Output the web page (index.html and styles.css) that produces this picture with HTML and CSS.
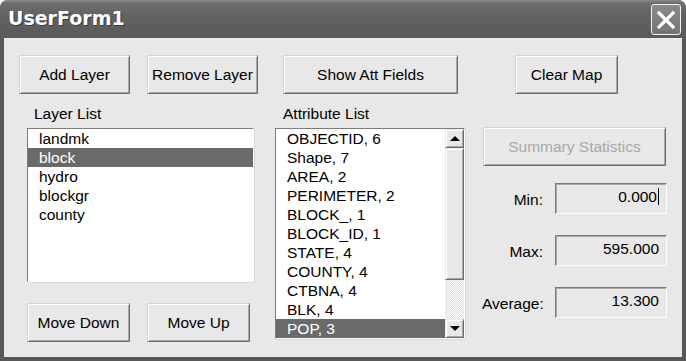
FILE: index.html
```html
<!DOCTYPE html>
<html>
<head>
    <title>UserForm1</title>
    <link rel="stylesheet" href="styles.css">
</head>
<body>
<div class="window">
    <div class="titleBar">
        <span class="titleText">UserForm1</span>
        <div class="closeBtn">
            <svg width="22" height="22" viewBox="0 0 22 22"><path d="M4 4 L18 18 M18 4 L4 18" stroke="#fff" stroke-width="3.2" stroke-linecap="square"/></svg>
        </div>
    </div>
    <div class="client">
        <div class="topRow">
            <div class="btn btnAdd">Add Layer</div>
            <div class="btn btnRemove">Remove Layer</div>
            <div class="btn btnShow">Show Att Fields</div>
            <div class="btn btnClear">Clear Map</div>
        </div>
        <div class="mainRow">
            <div class="col colLayers">
                <div class="label">Layer List</div>
                <div class="listBox layerList">
                    <div class="item">landmk</div>
                    <div class="item selected">block</div>
                    <div class="item">hydro</div>
                    <div class="item">blockgr</div>
                    <div class="item">county</div>
                </div>
                <div class="moveRow">
                    <div class="btn btnMove">Move Down</div>
                    <div class="btn btnMove btnUp">Move Up</div>
                </div>
            </div>
            <div class="col colAttrs">
                <div class="label">Attribute List</div>
                <div class="listBox attrList">
                    <div class="items">
                        <div class="item">OBJECTID, 6</div>
                        <div class="item">Shape, 7</div>
                        <div class="item">AREA, 2</div>
                        <div class="item">PERIMETER, 2</div>
                        <div class="item">BLOCK_, 1</div>
                        <div class="item">BLOCK_ID, 1</div>
                        <div class="item">STATE, 4</div>
                        <div class="item">COUNTY, 4</div>
                        <div class="item">CTBNA, 4</div>
                        <div class="item">BLK, 4</div>
                        <div class="item selected">POP, 3</div>
                    </div>
                    <div class="scrollBar">
                        <div class="sbBtn"><span class="triUp"></span></div>
                        <div class="sbThumb"></div>
                        <div class="sbTrack"></div>
                        <div class="sbBtn"><span class="triDown"></span></div>
                    </div>
                </div>
            </div>
            <div class="col colStats">
                <div class="btn btnStats disabled">Summary Statistics</div>
                <div class="statRow first">
                    <div class="statLabel">Min:</div>
                    <div class="statBox">0.000<span class="caret"></span></div>
                </div>
                <div class="statRow">
                    <div class="statLabel">Max:</div>
                    <div class="statBox">595.000</div>
                </div>
                <div class="statRow">
                    <div class="statLabel">Average:</div>
                    <div class="statBox">13.300</div>
                </div>
            </div>
        </div>
    </div>
</div>
</body>
</html>
```
FILE: styles.css
```css
html,body{
    margin: 0;
    padding: 0;
    background-color: #fff;
}
.window{
    width: 686px;
    height: 361px;
    background-color: #575757;
    border-radius: 8px 8px 0 0;
    box-sizing: border-box;
    display: flex;
    flex-direction: column;
    overflow: hidden;
    font-family: "Liberation Sans", Arial, sans-serif;
    font-size: 15.5px;
    color: #000;
}
.titleBar{
    height: 38px;
    flex: none;
    display: flex;
    align-items: center;
    justify-content: space-between;
    padding: 0 5px 0 8px;
    background: linear-gradient(#8c8c8c 0, #6e6e6e 3px, #626262 40%, #5a5a5a 100%);
}
.titleText{
    font-family: "DejaVu Sans", sans-serif;
    font-weight: bold;
    font-size: 19px;
    color: #fff;
    text-shadow: 1px 1px 0 #3a3a3a;
    margin-top: -2px;
}
.closeBtn{
    width: 28px;
    height: 29px;
    border: 1px solid #f4f4f4;
    border-radius: 3px;
    background: linear-gradient(#8a8a8a, #747474);
    display: flex;
    align-items: center;
    justify-content: center;
    margin-top: 1px;
}
.client{
    flex: 1;
    margin: 0 4px 4px 4px;
    background-color: #e8e8e8;
    padding-top: 17px;
    box-sizing: border-box;
    border-top: 1px solid #f0f0f0;
}
.btn{
    height: 39px;
    box-sizing: border-box;
    border: 1px solid;
    border-color: #d4d4d4 #6e6e6e #6e6e6e #d4d4d4;
    box-shadow: inset 1px 1px 0 #fff, inset -1px -1px 0 #a6a6a6;
    background-color: #e8e8e8;
    display: flex;
    align-items: center;
    justify-content: center;
    white-space: nowrap;
}
.topRow{
    display: flex;
    margin-top: -1px;
}
.btnAdd{ margin-left: 15px; width: 111px; }
.btnRemove{ margin-left: 17px; width: 111px; }
.btnShow{ margin-left: 25px; width: 175px; }
.btnClear{ margin-left: 57px; width: 103px; }

.mainRow{
    display: flex;
}
.col{
    display: flex;
    flex-direction: column;
}
.colLayers{ margin-left: 23px; width: 227px; }
.colAttrs{ margin-left: 21px; width: 190px; }
.colStats{ margin-left: 17px; width: 185px; }

.label{
    margin-top: 10px;
    height: 19px;
    line-height: 19px;
    padding-left: 7px;
    margin-bottom: 5px;
}
.colAttrs .label{ padding-left: 8px; }

.listBox{
    background-color: #fff;
    box-sizing: border-box;
    border: 1px solid;
    border-color: #7c7c7c #fdfdfd #fdfdfd #7c7c7c;
    box-shadow: 1px 1px 0 #d8d8d8;
}
.layerList{ height: 154px; }
.attrList{
    height: 211px;
    display: flex;
}
.attrList .items{ flex: 1; }
.item{
    height: 19px;
    line-height: 19px;
    padding-left: 11px;
    white-space: nowrap;
}
.item.selected{
    background-color: #6a6a6a;
    color: #fff;
}
.scrollBar{
    width: 19px;
    display: flex;
    flex-direction: column;
}
.sbBtn,.sbThumb{
    box-sizing: border-box;
    background-color: #e8e8e8;
    border: 1px solid;
    border-color: #e8e8e8 #6e6e6e #6e6e6e #e8e8e8;
    box-shadow: inset 1px 1px 0 #fff, inset -1px -1px 0 #a6a6a6;
}
.sbBtn{
    height: 19px;
    display: flex;
    align-items: center;
    justify-content: center;
}
.sbThumb{ height: 132px; }
.sbTrack{
    flex: 1;
    background: repeating-conic-gradient(#fff 0 25%, #dcdcdc 0 50%) 0 0/2px 2px;
}
.triUp{
    width: 0;
    height: 0;
    border-left: 5px solid transparent;
    border-right: 5px solid transparent;
    border-bottom: 5px solid #000;
}
.triDown{
    width: 0;
    height: 0;
    border-left: 5px solid transparent;
    border-right: 5px solid transparent;
    border-top: 5px solid #000;
}
.moveRow{
    display: flex;
    margin-top: 21px;
}
.btnMove{ width: 103px; }
.btnUp{ margin-left: 17px; }

.btnStats{
    margin-left: 1px;
    width: 183px;
    margin-top: 33px;
}
.disabled{ color: #a8a8a8; }
.statRow{
    display: flex;
    align-items: center;
    margin-top: 21px;
}
.statRow.first{ margin-top: 17px; }
.statLabel{
    width: 61px;
    text-align: right;
    padding-top: 3px;
}
.statBox{
    margin-left: 12px;
    width: 112px;
    height: 31px;
    box-sizing: border-box;
    border: 1px solid;
    border-color: #7c7c7c #fdfdfd #fdfdfd #7c7c7c;
    box-shadow: inset 1px 1px 0 #a8a8a8;
    display: flex;
    align-items: center;
    justify-content: flex-end;
    padding-right: 7px;
    padding-bottom: 4px;
}
.caret{
    display: inline-block;
    width: 1px;
    height: 17px;
    background-color: #000;
    margin-left: 1px;
}
```
